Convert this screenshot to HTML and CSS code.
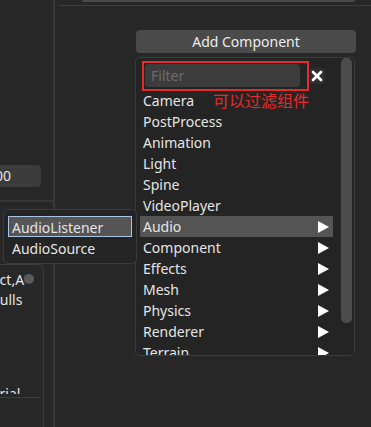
FILE: index.html
```html
<!DOCTYPE html>
<html lang="en">
<head>
    <meta charset="UTF-8">
    <title>Add Component</title>
    <link rel="stylesheet" href="styles.css">
</head>
<body>

<div class="editor">
    <aside class="sidebar">
        <div class="num-field"><span>100</span></div>
        <div class="sep"></div>
        <div class="group">
            <div class="row row-first"><span class="label-wrap"><span class="label">Rect,All</span></span><span class="dot"></span></div>
            <div class="row"><span class="label label-culls">Culls</span></div>
            <div class="row row-clip"><span class="label label-mat">Material</span></div>
            <div class="group-line"></div>
        </div>
    </aside>
    <div class="divider"></div>
    <main class="inspector">
        <div class="top-field"></div>
        <div class="top-line"></div>
        <button class="add-btn">Add Component</button>
    </main>
</div>

<div class="menu">
    <div class="menu-body">
        <div class="filter-row">
            <div class="filter-input">Filter</div>
            <span class="clear-btn">
                <svg width="12" height="12" viewBox="0 0 12 12"><path d="M2 2 L10 10 M10 2 L2 10" stroke="#fff" stroke-width="2.8" stroke-linecap="round"/></svg>
            </span>
        </div>
        <ul class="menu-list">
            <li>Camera</li>
            <li>PostProcess</li>
            <li>Animation</li>
            <li>Light</li>
            <li>Spine</li>
            <li>VideoPlayer</li>
            <li class="active sub">Audio</li>
            <li class="sub">Component</li>
            <li class="sub">Effects</li>
            <li class="sub">Mesh</li>
            <li class="sub">Physics</li>
            <li class="sub">Renderer</li>
            <li class="sub">Terrain</li>
        </ul>
    </div>
    <div class="scrollbar"><div class="thumb"></div></div>
    <div class="note-box"></div>
    <div class="note-text">可以过滤组件</div>
</div>

<div class="submenu">
    <div class="sub-item selected">AudioListener</div>
    <div class="sub-item">AudioSource</div>
</div>

</body>
</html>
```

FILE: styles.css
```css
body {
    margin: 0;
    width: 371px;
    height: 427px;
    overflow: hidden;
    background-color: #272727;
    font-family: "Noto Sans", "Open Sans", sans-serif;
    font-size: 14px;
    color: #e4e4e4;
}
.editor {
    display: grid;
    grid-template-columns: 53px 2px 1fr;
    height: 427px;
}
.sidebar {
    overflow: hidden;
}
.num-field {
    margin-top: 165px;
    width: 41px;
    height: 22px;
    line-height: 22px;
    background-color: #3b3b3b;
    border-radius: 0 4px 4px 0;
    overflow: hidden;
    white-space: nowrap;
}
.num-field span {
    display: inline-block;
    margin-left: -13px;
}
.sep {
    margin-top: 13px;
    height: 2px;
    background-color: #363636;
}
.group {
    margin-top: 62px;
    width: 44px;
    height: 200px;
    box-sizing: border-box;
    border-top: 1px solid #3c3c3c;
    border-right: 1px solid #3c3c3c;
    border-top-right-radius: 6px;
    padding-top: 5px;
    position: relative;
}
.row {
    height: 20px;
    line-height: 20px;
    white-space: nowrap;
    position: relative;
}
.label-wrap {
    display: inline-block;
    width: 25px;
    overflow: hidden;
    vertical-align: top;
}
.label {
    display: inline-block;
    margin-left: -17px;
}
.label-culls {
    margin-left: -9px;
}
.label-mat {
    margin-left: -34px;
}
.dot {
    position: absolute;
    left: 24px;
    top: 4px;
    width: 10px;
    height: 10px;
    border-radius: 50%;
    background-color: #5a5a5a;
}
.row-clip {
    margin-top: 74px;
    height: 10px;
    overflow: hidden;
}
.group-line {
    margin-top: 3px;
    width: 41px;
    height: 1px;
    background-color: #3c3c3c;
}
.divider {
    background-color: #393939;
}
.inspector {
    display: flex;
    flex-direction: column;
    align-items: flex-start;
}
.top-field {
    margin-left: 27px;
    width: 273px;
    height: 2px;
    background-color: #4a4a4a;
    border-radius: 0 0 3px 3px;
}
.top-line {
    margin-top: 3px;
    margin-left: 4px;
    align-self: stretch;
    height: 1px;
    background-color: #3d3d3d;
}
.add-btn {
    margin-top: 24px;
    margin-left: 81px;
    width: 220px;
    height: 23px;
    padding: 0;
    border: none;
    border-radius: 4px;
    background-color: #4a4a4a;
    color: #ececec;
    font-family: inherit;
    font-size: 14px;
    line-height: 23px;
}

/* add component popup */
.menu {
    position: absolute;
    left: 135px;
    top: 57px;
    width: 220px;
    height: 299px;
    box-sizing: border-box;
    border: 1px solid #3a3a3a;
    border-radius: 5px;
    background-color: #242424;
    display: grid;
    grid-template-columns: 205px 12px;
    overflow: hidden;
}
.menu-body {
    overflow: hidden;
}
.filter-row {
    display: flex;
    align-items: center;
    padding: 6px 0 3px 9px;
}
.filter-input {
    width: 155px;
    height: 23px;
    line-height: 23px;
    box-sizing: border-box;
    padding-left: 6px;
    border-radius: 4px;
    background-color: #3c3c3c;
    color: #6c6c6c;
}
.clear-btn {
    margin-left: 8px;
    width: 17px;
    height: 16px;
    border-radius: 3px;
    background-color: #2e2e2e;
    display: flex;
    align-items: center;
    justify-content: center;
}
.menu-list {
    list-style: none;
    margin: 0;
    padding: 0 8px 0 4px;
}
.menu-list li {
    height: 21px;
    line-height: 21px;
    padding: 0 4px 0 3px;
    display: flex;
    justify-content: space-between;
    align-items: center;
}
.menu-list li.sub::after {
    content: "";
    width: 0;
    height: 0;
    border-top: 6px solid transparent;
    border-bottom: 6px solid transparent;
    border-left: 11px solid #fff;
}
.menu-list li.active {
    background-color: #545454;
}
.thumb {
    width: 11px;
    height: 265px;
    border-radius: 5px;
    background-color: #4c4c4c;
}
.note-box {
    position: absolute;
    left: 6px;
    top: 3px;
    width: 167px;
    height: 30px;
    box-sizing: border-box;
    border: 2px solid #e42b2b;
}
.note-text {
    position: absolute;
    left: 77px;
    top: 34px;
    font-family: "Noto Sans CJK SC", sans-serif;
    font-size: 16px;
    line-height: 16px;
    color: #e42b2b;
}

/* audio submenu */
.submenu {
    position: absolute;
    left: 3px;
    top: 209px;
    width: 134px;
    box-sizing: border-box;
    padding: 6px 4px 5px 4px;
    border: 1px solid #3a3a3a;
    border-radius: 5px;
    background-color: #242424;
}
.sub-item {
    height: 21px;
    line-height: 21px;
    box-sizing: border-box;
    padding-left: 3px;
    border: 1px solid transparent;
}
.sub-item.selected {
    background-color: #555;
    border-color: #aac4e4;
}
```
